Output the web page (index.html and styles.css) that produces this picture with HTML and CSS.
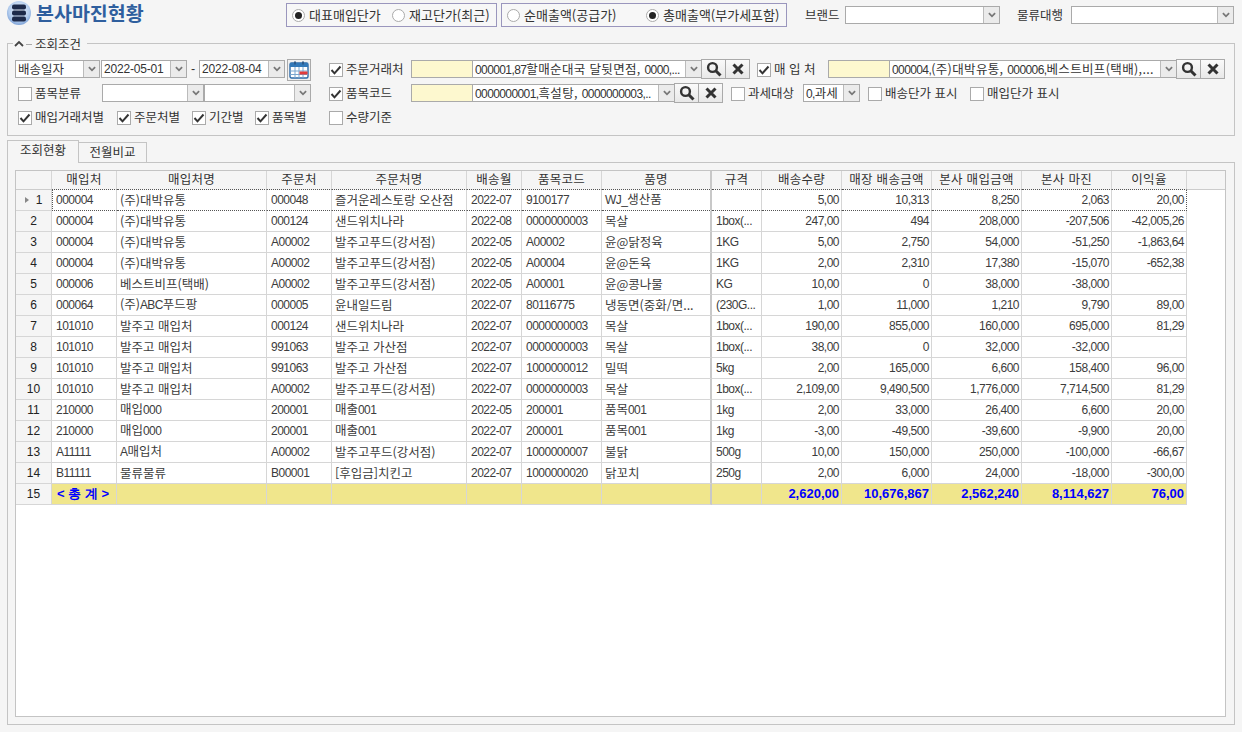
FILE: index.html
```html
<!DOCTYPE html>
<html lang="ko">
<head>
<meta charset="utf-8">
<title>본사마진현황</title>
<link rel="stylesheet" href="styles.css">
</head>
<body>
<svg class="defs" width="0" height="0" aria-hidden="true">
  <symbol id="down" viewBox="0 0 16 18"><path d="M4.5 7l3.5 3.5L11.500 7" fill="none" stroke="#777" stroke-width="2"/></symbol>
  <symbol id="tick" viewBox="0 0 14 14"><path d="M2.500 7l3 3.300L11.500 3.500" fill="none" stroke="#333" stroke-width="2"/></symbol>
  <symbol id="mag" viewBox="0 0 16 16"><circle cx="6.500" cy="6.500" r="4.400" fill="none" stroke="#333" stroke-width="2.400"/><path d="M10 10l4.500 4.500" stroke="#333" stroke-width="3"/></symbol>
  <symbol id="cross" viewBox="0 0 12 12"><path d="M1.500 1.500l9 9M10.500 1.500l-9 9" stroke="#333" stroke-width="3"/></symbol>
</svg>
<header class="topbar">
  <div class="title-wrap">
    <svg class="logo" viewBox="0 0 26 24" width="26" height="24"><defs><radialGradient id="lg" cx="50%" cy="40%" r="60%"><stop offset="0" stop-color="#f2f6fc"/><stop offset=".7" stop-color="#b4cdee"/><stop offset="1" stop-color="#7ea3d8"/></radialGradient></defs><circle cx="13" cy="12" r="12" fill="url(#lg)"/><rect x="6" y="3.500" width="14" height="5" rx="2" fill="#1d2a4a"/><rect x="6" y="9.500" width="14" height="5" rx="2" fill="#1d2a4a"/><rect x="6" y="15.500" width="14" height="5" rx="2" fill="#1d2a4a"/></svg>
    <h1 class="title">본사마진현황</h1>
  </div>
  <div class="radio-box box-a">
    <label class="opt w-a"><span class="radio on"></span>대표매입단가</label>
    <label class="opt"><span class="radio"></span>재고단가(최근)</label>
  </div>
  <div class="radio-box box-b">
    <label class="opt w-b"><span class="radio"></span>순매출액(공급가)</label>
    <label class="opt"><span class="radio on"></span>총매출액(부가세포함)</label>
  </div>
  <span class="lbl brand-l">브랜드</span>
  <div class="combo w-brand"><span class="combo-text"></span><span class="arrow"><svg width="16" height="16"><use href="#down"/></svg></span></div>
  <span class="lbl log-l">물류대행</span>
  <div class="combo w-log"><span class="combo-text"></span><span class="arrow"><svg width="16" height="16"><use href="#down"/></svg></span></div>
</header>

<section class="group">
  <div class="legend">
    <svg width="10" height="8" viewBox="0 0 10 8"><path d="M1 6l4-4 4 4" fill="none" stroke="#444" stroke-width="1.800"/></svg>
    <span class="dash"></span><span class="legend-text">조회조건</span>
  </div>
  <div class="row">
    <div class="left">
      <div class="combo w-kind"><span class="combo-text">배송일자</span><span class="arrow"><svg width="16" height="16"><use href="#down"/></svg></span></div>
      <div class="combo w-date"><span class="combo-text n date">2022-05-01</span><span class="arrow"><svg width="16" height="16"><use href="#down"/></svg></span></div>
      <span class="tilde">-</span>
      <div class="combo w-date"><span class="combo-text n date">2022-08-04</span><span class="arrow"><svg width="16" height="16"><use href="#down"/></svg></span></div>
      <button class="cal" type="button"><svg width="20" height="18" viewBox="0 0 20 18"><rect x="1" y="2" width="18" height="15" rx="1.500" fill="#fff" stroke="#2c6aa8" stroke-width="1.400"/><rect x="1" y="2" width="18" height="4" fill="#3278b8"/><path d="M1 10h18M1 13.500h18M6 6v11M10 6v11M14 6v11" stroke="#7aa6cf" stroke-width="1"/><rect x="10.500" y="10.500" width="8" height="3" fill="#e23b3b"/><rect x="5" y="0.500" width="2" height="3" fill="#2c5a8a"/><rect x="13" y="0.500" width="2" height="3" fill="#2c5a8a"/></svg></button>
    </div>
    <label class="chk-l w-c1"><span class="chk"><svg width="14" height="14"><use href="#tick"/></svg></span>주문거래처</label>
    <span class="yellow"></span>
    <div class="combo w-m1"><span class="combo-text wide"><span class="n">000001,87</span>할매순대국 달뒷면점, <span class="n">0000,...</span></span><span class="arrow"><svg width="16" height="16"><use href="#down"/></svg></span></div>
    <button class="btn" type="button"><svg width="16" height="16"><use href="#mag"/></svg></button><button class="btn" type="button"><svg width="12" height="12"><use href="#cross"/></svg></button>
    <label class="chk-l w-c2"><span class="chk"><svg width="14" height="14"><use href="#tick"/></svg></span>매 입 처</label>
    <span class="yellow"></span>
    <div class="combo w-m2"><span class="combo-text wide"><span class="n">000004,</span>(주)대박유통, <span class="n">000006,</span>베스트비프(택배),...</span><span class="arrow"><svg width="16" height="16"><use href="#down"/></svg></span></div>
    <button class="btn" type="button"><svg width="16" height="16"><use href="#mag"/></svg></button><button class="btn" type="button"><svg width="12" height="12"><use href="#cross"/></svg></button>
  </div>
  <div class="row">
    <div class="left">
      <label class="chk-l w-item"><span class="chk"></span>품목분류</label>
      <div class="combo w-i1"><span class="combo-text"></span><span class="arrow"><svg width="16" height="16"><use href="#down"/></svg></span></div>
      <div class="combo w-i2"><span class="combo-text"></span><span class="arrow"><svg width="16" height="16"><use href="#down"/></svg></span></div>
    </div>
    <label class="chk-l w-c1"><span class="chk"><svg width="14" height="14"><use href="#tick"/></svg></span>품목코드</label>
    <span class="yellow"></span>
    <div class="combo w-m3"><span class="combo-text wide"><span class="n">0000000001,</span>흑설탕, <span class="n">0000000003,..</span></span><span class="arrow"><svg width="16" height="16"><use href="#down"/></svg></span></div>
    <button class="btn" type="button"><svg width="16" height="16"><use href="#mag"/></svg></button><button class="btn" type="button"><svg width="12" height="12"><use href="#cross"/></svg></button>
    <label class="chk-l w-tax"><span class="chk"></span>과세대상</label>
    <div class="combo w-taxc"><span class="combo-text"><span class="n">0,</span>과세</span><span class="arrow"><svg width="16" height="16"><use href="#down"/></svg></span></div>
    <label class="chk-l w-p1"><span class="chk"></span>배송단가 표시</label>
    <label class="chk-l w-p2"><span class="chk"></span>매입단가 표시</label>
  </div>
  <div class="row">
    <div class="left left-checks">
      <label class="chk-l w-g1"><span class="chk"><svg width="14" height="14"><use href="#tick"/></svg></span>매입거래처별</label>
      <label class="chk-l w-g2"><span class="chk"><svg width="14" height="14"><use href="#tick"/></svg></span>주문처별</label>
      <label class="chk-l w-g3"><span class="chk"><svg width="14" height="14"><use href="#tick"/></svg></span>기간별</label>
      <label class="chk-l"><span class="chk"><svg width="14" height="14"><use href="#tick"/></svg></span>품목별</label>
    </div>
    <label class="chk-l"><span class="chk"></span>수량기준</label>
  </div>
</section>

<nav class="tabs">
  <span class="tab active">조회현황</span>
  <span class="tab">전월비교</span>
</nav>

<section class="panel">
  <div class="grid">
    <table>
      <colgroup>
        <col class="c36"><col class="c65"><col class="c150"><col class="c65"><col class="c135"><col class="c55"><col class="c80"><col class="c110"><col class="c50"><col class="c80"><col class="c90"><col class="c90"><col class="c90"><col class="c75"><col class="c38">
      </colgroup>
      <thead>
        <tr><th class="first"></th><th>매입처</th><th>매입처명</th><th>주문처</th><th>주문처명</th><th>배송월</th><th>품목코드</th><th>품명</th><th>규격</th><th>배송수량</th><th>매장 배송금액</th><th>본사 매입금액</th><th>본사 마진</th><th>이익율</th><th class="filler"></th></tr>
      </thead>
      <tbody>
        <tr class="sel"><td class="first"><span class="cur"></span>1</td><td>000004</td><td>(주)대박유통</td><td>000048</td><td>즐거운레스토랑 오산점</td><td>2022-07</td><td>9100177</td><td><span class="n">WJ_</span>생산품</td><td></td><td>5,00</td><td>10,313</td><td>8,250</td><td>2,063</td><td>20,00</td><td class="blank"></td></tr>
        <tr><td class="first">2</td><td>000004</td><td>(주)대박유통</td><td>000124</td><td>샌드위치나라</td><td>2022-08</td><td>0000000003</td><td>목살</td><td>1box(...</td><td>247,00</td><td>494</td><td>208,000</td><td>-207,506</td><td>-42,005,26</td><td class="blank"></td></tr>
        <tr><td class="first">3</td><td>000004</td><td>(주)대박유통</td><td>A00002</td><td>발주고푸드(강서점)</td><td>2022-05</td><td>A00002</td><td>윤@닭정육</td><td>1KG</td><td>5,00</td><td>2,750</td><td>54,000</td><td>-51,250</td><td>-1,863,64</td><td class="blank"></td></tr>
        <tr><td class="first">4</td><td>000004</td><td>(주)대박유통</td><td>A00002</td><td>발주고푸드(강서점)</td><td>2022-05</td><td>A00004</td><td>윤@돈육</td><td>1KG</td><td>2,00</td><td>2,310</td><td>17,380</td><td>-15,070</td><td>-652,38</td><td class="blank"></td></tr>
        <tr><td class="first">5</td><td>000006</td><td>베스트비프(택배)</td><td>A00002</td><td>발주고푸드(강서점)</td><td>2022-05</td><td>A00001</td><td>윤@콩나물</td><td>KG</td><td>10,00</td><td>0</td><td>38,000</td><td>-38,000</td><td></td><td class="blank"></td></tr>
        <tr><td class="first">6</td><td>000064</td><td>(주)<span class="n">ABC</span>푸드팡</td><td>000005</td><td>윤내일드림</td><td>2022-07</td><td>80116775</td><td>냉동면(중화/면...</td><td>(230G...</td><td>1,00</td><td>11,000</td><td>1,210</td><td>9,790</td><td>89,00</td><td class="blank"></td></tr>
        <tr><td class="first">7</td><td>101010</td><td>발주고 매입처</td><td>000124</td><td>샌드위치나라</td><td>2022-07</td><td>0000000003</td><td>목살</td><td>1box(...</td><td>190,00</td><td>855,000</td><td>160,000</td><td>695,000</td><td>81,29</td><td class="blank"></td></tr>
        <tr><td class="first">8</td><td>101010</td><td>발주고 매입처</td><td>991063</td><td>발주고 가산점</td><td>2022-07</td><td>0000000003</td><td>목살</td><td>1box(...</td><td>38,00</td><td>0</td><td>32,000</td><td>-32,000</td><td></td><td class="blank"></td></tr>
        <tr><td class="first">9</td><td>101010</td><td>발주고 매입처</td><td>991063</td><td>발주고 가산점</td><td>2022-07</td><td>1000000012</td><td>밀떡</td><td>5kg</td><td>2,00</td><td>165,000</td><td>6,600</td><td>158,400</td><td>96,00</td><td class="blank"></td></tr>
        <tr><td class="first">10</td><td>101010</td><td>발주고 매입처</td><td>A00002</td><td>발주고푸드(강서점)</td><td>2022-07</td><td>0000000003</td><td>목살</td><td>1box(...</td><td>2,109,00</td><td>9,490,500</td><td>1,776,000</td><td>7,714,500</td><td>81,29</td><td class="blank"></td></tr>
        <tr><td class="first">11</td><td>210000</td><td>매입<span class="n">000</span></td><td>200001</td><td>매출<span class="n">001</span></td><td>2022-05</td><td>200001</td><td>품목<span class="n">001</span></td><td>1kg</td><td>2,00</td><td>33,000</td><td>26,400</td><td>6,600</td><td>20,00</td><td class="blank"></td></tr>
        <tr><td class="first">12</td><td>210000</td><td>매입<span class="n">000</span></td><td>200001</td><td>매출<span class="n">001</span></td><td>2022-07</td><td>200001</td><td>품목<span class="n">001</span></td><td>1kg</td><td>-3,00</td><td>-49,500</td><td>-39,600</td><td>-9,900</td><td>20,00</td><td class="blank"></td></tr>
        <tr><td class="first">13</td><td>A11111</td><td><span class="n">A</span>매입처</td><td>A00002</td><td>발주고푸드(강서점)</td><td>2022-07</td><td>1000000007</td><td>불닭</td><td>500g</td><td>10,00</td><td>150,000</td><td>250,000</td><td>-100,000</td><td>-66,67</td><td class="blank"></td></tr>
        <tr><td class="first">14</td><td>B11111</td><td>물류물류</td><td>B00001</td><td>[후입금]치킨고</td><td>2022-07</td><td>1000000020</td><td>닭꼬치</td><td>250g</td><td>2,00</td><td>6,000</td><td>24,000</td><td>-18,000</td><td>-300,00</td><td class="blank"></td></tr>
        <tr class="total"><td class="first">15</td><td class="sum-label">&lt; 총 계 &gt;</td><td></td><td></td><td></td><td></td><td></td><td></td><td></td><td>2,620,00</td><td>10,676,867</td><td>2,562,240</td><td>8,114,627</td><td>76,00</td><td class="blank"></td></tr>
      </tbody>
    </table>
  </div>
</section>
</body>
</html>
```
FILE: styles.css
```css
* { box-sizing: border-box; }
html, body { height: 100%; }
body {
  margin: 0;
  width: 1242px;
  height: 732px;
  overflow: hidden;
  padding: 0 7px;
  background: #f5f5f5;
  color: #333;
  font: 12.5px/16px "Noto Sans CJK KR", sans-serif;
}
.defs { position: absolute; }
.n { font: 12px/16px "Liberation Sans", "Noto Sans CJK KR", sans-serif; letter-spacing: -0.6px; }

/* top bar */
.topbar { display: flex; align-items: center; height: 24px; margin: 3px 0 16px; }
.title-wrap { display: flex; align-items: center; width: 280px; margin-left: -1px; margin-top: -4px; }
.logo { flex: none; }
.title { margin: 0 0 0 4px; font-size: 19.500px; line-height: 24px; font-weight: 700; color: #2f5f9e; }
.radio-box { display: flex; align-items: center; height: 24px; border: 1px solid #9a96bd; padding-left: 5px; background: #f7f7f7; font-size: 13px; }
.box-a { width: 211px; }
.box-b { width: 286px; margin-left: 4px; }
.opt { display: flex; align-items: center; gap: 4px; white-space: nowrap; }
.w-a { width: 100px; }
.w-b { width: 139px; }
.radio { width: 13px; height: 13px; border: 1px solid #aaa; border-radius: 50%; background: #fff; flex: none; display: flex; align-items: center; justify-content: center; }
.radio.on::after { content: ""; width: 7px; height: 7px; border-radius: 50%; background: #222; }
.lbl { white-space: nowrap; }
.brand-l { margin-left: 18px; width: 40px; }
.log-l { margin-left: 17px; width: 54px; }

/* combo */
.combo { display: flex; height: 18px; border: 1px solid #aaa; background: #fff; flex: none; }
.combo-text { flex: 1; min-width: 0; padding-left: 2px; white-space: nowrap; line-height: 16px; }
.combo-text.date { letter-spacing: -0.2px; }
.combo-text.wide { letter-spacing: 0.35px; }
.arrow { flex: none; width: 16px; height: 16px; background: #ebebeb; border-left: 1px solid #bbb; display: flex; align-items: center; justify-content: center; }
.arrow svg { flex: none; }
.w-brand { width: 155px; }
.w-log { width: 163px; }
.w-kind { width: 85px; margin-right: 1px; }
.w-date { width: 86px; }
.w-i1 { width: 102px; }
.w-i2 { width: 107px; }
.w-m1 { width: 230px; }
.w-m2 { width: 288px; }
.w-m3 { width: 203px; }
.w-taxc { width: 57px; margin-right: 8px; }

/* group */
.group { position: relative; height: 93px; border: 1px solid #c4c4c4; padding: 13px 0 0 7px; }
.legend { position: absolute; top: -8px; left: 5px; display: flex; align-items: center; height: 16px; padding: 0 6px 0 1px; background: #f5f5f5; }
.dash { width: 6px; height: 1px; margin: 0 3px 0 2px; background: #aaa; }
.row { display: flex; align-items: center; height: 24px; }
.left { display: flex; align-items: center; width: 314px; flex: none; }
.left-checks { padding-left: 3px; }
.tilde { width: 12px; text-align: center; font-family: "Liberation Sans", sans-serif; }
.cal { width: 24px; height: 22px; margin: 2px 0 0 2px; padding: 0; border: 1px solid #aaa; background: #f0f0f0; display: flex; align-items: center; justify-content: center; }
.chk-l { display: flex; align-items: center; gap: 3px; white-space: nowrap; flex: none; }
.chk { width: 14px; height: 14px; border: 1px solid #aaa; background: #fff; flex: none; display: flex; align-items: center; justify-content: center; margin-top: 1px; }
.chk svg { flex: none; }
.w-c1 { width: 82px; }
.w-c2 { width: 71px; margin-left: 7px; }
.w-item { width: 84px; margin-left: 3px; }
.w-tax { width: 72px; margin-left: 8px; }
.w-p1 { width: 102px; }
.w-g1 { width: 99px; }
.w-g2 { width: 75px; }
.w-g3 { width: 63px; }
.yellow { width: 61px; height: 18px; border: 1px solid #aaa; border-right: 0; background: #fdf8cf; flex: none; }
.btn { width: 25px; height: 20px; padding: 0; margin-left: -1px; border: 1px solid #aaa; background: linear-gradient(#fafafa, #e8e8e8); display: flex; align-items: center; justify-content: center; flex: none; }

/* tabs */
.tabs { display: flex; align-items: flex-end; height: 22px; margin-top: 4px; }
.tab { height: 20px; padding: 1px 0 0; width: 69px; text-align: center; border: 1px solid #c4c4c4; border-bottom: 0; margin-left: -1px; }
.tab.active { height: 23px; width: 72px; margin: 0 0 -1px; background: #f5f5f5; position: relative; z-index: 1; }

/* grid */
.panel { height: 563px; border: 1px solid #c4c4c4; padding: 7px 8px 7px 7px; }
.grid { width: 1211px; height: 547px; border: 1px solid #c4c4c4; background: #fff; overflow: hidden; }
table { width: 1209px; table-layout: fixed; border-collapse: separate; border-spacing: 0; }
.c36 { width: 36px; } .c38 { width: 38px; } .c50 { width: 50px; } .c55 { width: 55px; } .c65 { width: 65px; }
.c75 { width: 75px; } .c80 { width: 80px; } .c90 { width: 90px; } .c110 { width: 110px; } .c135 { width: 135px; } .c150 { width: 150px; }
th { height: 19px; padding: 0 0 2px; font-weight: 400; letter-spacing: 0.3px; text-align: center; background: #f5f5f5; border-right: 1px solid #d6d6d6; border-bottom: 1px dotted #555; white-space: nowrap; line-height: 16px; }
th.first { border-bottom: 1px solid #ccc; }
th.filler { border-right: 0; border-bottom: 1px solid #ccc; }
th:nth-child(8), td:nth-child(8) { border-right: 2px solid #c8c8c8; }
td { height: 21px; padding: 0 2px 1px 4px; border-right: 1px solid #d6d6d6; border-bottom: 1px solid #d6d6d6; white-space: nowrap; font: 12px/16px "Liberation Sans", "Noto Sans CJK KR", sans-serif; letter-spacing: -0.5px; color: #3c3c3c; }
td:nth-child(3), td:nth-child(5), td:nth-child(8) { font: 12.5px/16px "Noto Sans CJK KR", sans-serif; letter-spacing: 0; padding-left: 3px; }
td:nth-child(n+10):nth-child(-n+14) { text-align: right; }
td.first { padding: 0 0 1px; text-align: center; background: #f5f5f5; font: 12px/16px "Liberation Sans", sans-serif; letter-spacing: 0; color: #222; }
td.blank { border: 0; background: #fff; }
.cur { display: inline-block; width: 0; height: 0; margin-right: 7px; border-left: 4px solid #888; border-top: 3px solid transparent; border-bottom: 3px solid transparent; vertical-align: 1px; }
.sel td:not(.first):not(.blank) { border-bottom: 1px dotted #555; }
.sel td:nth-child(2) { border-left: 1px dotted #555; padding-left: 3px; }
.sel td:nth-child(14) { border-right: 1px dotted #555; }
.total td:not(.first):not(.blank) { background: #f0e68c; color: #0000ff; font: 700 13px/16px "Liberation Sans", sans-serif; letter-spacing: 0; }
.total td.sum-label { font: 700 12.5px/16px "Noto Sans CJK KR", sans-serif; padding-left: 5px; letter-spacing: 0.3px; }
```
